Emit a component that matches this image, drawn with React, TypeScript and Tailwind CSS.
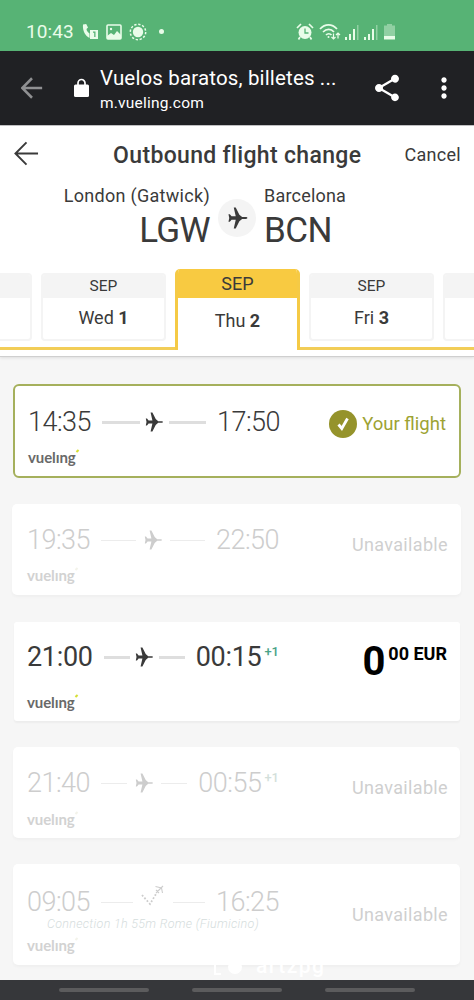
import React from 'react';
import { MdShare, MdMoreVert } from 'react-icons/md';
import clsx from 'clsx';

interface Flight {
  departure: string;
  arrival: string;
  nextDay?: boolean;
  connection?: string;
  status: 'current' | 'unavailable' | 'available';
  card: string;
  times: string;
  right: string;
  logo: string;
}

const flights: Flight[] = [
  {
    departure: '14:35',
    arrival: '17:50',
    status: 'current',
    card: 'ml-[13px] w-[448px] h-[94px] mb-[26px] border-2 border-[#a5b05c] rounded-[6px] pl-[13px] pr-[13px]',
    times: 'mt-[20px]',
    right: 'mt-[24px]',
    logo: 'mt-[8px]',
  },
  {
    departure: '19:35',
    arrival: '22:50',
    status: 'unavailable',
    card: 'ml-[12px] w-[449px] h-[91px] mb-[27px] rounded-[5px] pl-[15px] pr-[13px] shadow-[0_2px_3px_rgba(0,0,0,0.03)]',
    times: 'mt-[20px]',
    right: 'mt-[27px]',
    logo: 'mt-[8px]',
  },
  {
    departure: '21:00',
    arrival: '00:15',
    nextDay: true,
    status: 'available',
    card: 'ml-[14px] w-[446px] h-[99px] mb-[26px] rounded-[3px] px-[13px] shadow-[0_2px_2px_rgba(0,0,0,0.04)]',
    times: 'mt-[19px]',
    right: 'mt-[17px]',
    logo: 'mt-[18px]',
  },
  {
    departure: '21:40',
    arrival: '00:55',
    nextDay: true,
    status: 'unavailable',
    card: 'ml-[13px] w-[447px] h-[91px] mb-[26px] rounded-[5px] pl-[14px] pr-[12px] shadow-[0_2px_3px_rgba(0,0,0,0.03)]',
    times: 'mt-[20px]',
    right: 'mt-[27px]',
    logo: 'mt-[9px]',
  },
  {
    departure: '09:05',
    arrival: '16:25',
    connection: 'Connection 1h 55m Rome (Fiumicino)',
    status: 'unavailable',
    card: 'ml-[13px] w-[447px] h-[101px] rounded-[5px] pl-[14px] pr-[12px] shadow-[0_2px_3px_rgba(0,0,0,0.03)]',
    times: 'mt-[22px]',
    right: 'mt-[37px]',
    logo: 'mt-[4px]',
  },
];

const Plane: React.FC<{ className?: string }> = ({ className }) => (
  <svg viewBox="0 0 18 20" className={className} fill="currentColor">
    <path d="M18 10c0 .5-.6.800-1.600.800h-3.200L10.700 13 7.400 19.500H5.600L7.400 11.500H3.600L2 13.500H.8L1.500 10 .8 6.500H2l1.600 2h3.800L5.600.5h1.800L10.700 7l2.500 2.200h3.200c1 0 1.600.300 1.600.800z" />
  </svg>
);

const ConnectionPlane: React.FC = () => (
  <svg viewBox="0 0 24 24" className="w-6 h-6 -mt-[14px] shrink-0" fill="none" stroke="currentColor">
    <path d="M1 12l8 9 6-10" strokeWidth="1.800" strokeDasharray="1.800 1.800" />
    <path d="M15 10l7-7M14.500 3.500l6 1.500 1 5M15 7l3 3" strokeWidth="1.100" />
  </svg>
);

const BackArrow: React.FC<{ className?: string }> = ({ className }) => (
  <svg viewBox="0 0 26 26" className={className} fill="none" stroke="currentColor">
    <path d="M13 1.500L1.500 13 13 24.500M1.500 13H25" />
  </svg>
);

const Logo: React.FC<{ faded: boolean; className: string }> = ({ faded, className }) => (
  <div className={clsx('flex h-[22px]', className, faded ? 'text-[#d2d2d2]' : 'text-[#696969]')}>
    <span className="font-[Lato] text-[15px] leading-[22px] font-bold tracking-[-0.1px]">vuelıng</span>
    <span className={clsx('w-[3px] h-[2px] mt-[4px] -rotate-45', faded ? 'bg-[#f3f3ea]' : 'bg-[#d6df35]')}></span>
  </div>
);

const StatusBar: React.FC = () => (
  <div className="h-[51px] bg-[#57b375] text-[#e9fce9] flex items-center pt-[12px] pl-[26px]">
    <span className="w-[56px] text-[19px] leading-[24px] tracking-[0.1px]">10:43</span>
    <svg viewBox="0 0 16 17" className="w-4 h-[17px]" fill="currentColor">
      <path d="M1 1.500L4.200 1 6 4.500 4.500 6c.3 2 1.300 3.300 3 4.500V15C3.500 13 .3 8 1 1.500z" />
      <path fillRule="evenodd" d="M8 7h8v9H8zM11 8.500v1.200h1.200V14h1.300V8.500z" />
    </svg>
    <svg viewBox="0 0 16 16" className="w-4 h-4 ml-[8px]" fill="none" stroke="currentColor">
      <rect x="1" y="1" width="14" height="14" rx="1" strokeWidth="1.600" />
      <path d="M1 12l4-3 3 2 3-4 4 4v4H1z" fill="currentColor" stroke="none" />
      <circle cx="5" cy="5" r="1.200" fill="currentColor" stroke="none" />
    </svg>
    <svg viewBox="0 0 18 18" className="w-[18px] h-[18px] ml-[7px]">
      <circle cx="9" cy="9" r="5.200" fill="currentColor" />
      <circle cx="9" cy="9" r="7.700" fill="none" stroke="currentColor" strokeWidth="1.500" strokeDasharray="2.300 1.730" />
    </svg>
    <span className="w-[5px] h-[5px] rounded-full bg-[#e9fce9] ml-[12px]"></span>
    <svg viewBox="0 0 18 18" className="w-[18px] h-[18px] ml-[132px]">
      <circle cx="9" cy="9.500" r="6.500" fill="currentColor" />
      <path d="M1 5l4-4M13 1l4 4M4 14l-1.500 2.500M14 14l1.500 2.500" stroke="currentColor" strokeWidth="1.700" />
      <path d="M9 5.500V10h3.500" fill="none" stroke="#57b375" strokeWidth="1.300" />
    </svg>
    <svg viewBox="0 0 22 18" className="w-[22px] h-[18px] ml-[5px] mr-[4px]" fill="none" stroke="currentColor" strokeWidth="1.700">
      <path d="M1 6c5-5.500 12-5.500 17 0M4 9c3.500-3.500 8-3.500 11 0M7 12c1.500-1.700 4-1.700 5.500 0" />
      <circle cx="9.500" cy="14" r="1" fill="currentColor" stroke="none" />
      <path d="M14.500 10.500V16m-2-2l2 2 2-2M19 15.500V10m-2 2l2-2 2 2" strokeWidth="1.200" />
    </svg>
    {[0, 1].map((sim) => (
      <svg key={sim} viewBox="0 0 14 16" className="w-[14px] h-4 mr-[5px]" fill="currentColor">
        <path d="M0 13h2v3H0zM4 10h2v6H4zM8 5h2v11H8z" />
        <path d="M12 1h1.500v15H12z" opacity=".4" />
      </svg>
    ))}
    <svg viewBox="0 0 11 17" className="w-[11px] h-[17px] ml-px" fill="currentColor">
      <path d="M3 1h5v1.500h3V13H0V2.500h3z" opacity=".4" />
      <path d="M0 13h11v3.500H0z" />
    </svg>
  </div>
);

const BrowserBar: React.FC = () => (
  <div className="h-[75px] bg-[#202124] text-white flex border-b border-[#c4c4c6]">
    <BackArrow className="w-[22px] h-[22px] ml-[21px] mt-[26px] text-[#8f9092] stroke-[3]" />
    <svg viewBox="0 0 15 19" className="w-[15px] h-[19px] ml-[31px] mt-[27px]">
      <rect x="0" y="6.500" width="15" height="12.500" rx="1.500" fill="currentColor" />
      <path d="M4 7.500V5a3.500 3.500 0 0 1 7 0v2.500" fill="none" stroke="currentColor" strokeWidth="1.700" />
    </svg>
    <div className="ml-[11px] w-[262px] pt-[14px]">
      <div className="text-[20.5px] leading-[26px] tracking-[0.15px] whitespace-nowrap">Vuelos baratos, billetes ...</div>
      <div className="text-[15.5px] leading-[20px] tracking-[0.2px] mt-[2px]">m.vueling.com</div>
    </div>
    <MdShare className="w-[32px] h-[32px] ml-[9px] mt-[21px]" />
    <MdMoreVert className="w-[32px] h-[32px] ml-[25px] mt-[21px]" />
  </div>
);

const DayTab: React.FC<{ day: string; date: string }> = ({ day, date }) => (
  <div className="w-[125px] h-[68px] shrink-0 border-2 border-[#f4f4f4] rounded-[4px] text-center bg-white overflow-hidden">
    <div className="bg-[#f4f4f4] h-[23px] text-[15.5px] leading-[22px]">{day && 'SEP'}</div>
    <div className="text-[18px] leading-[40px]">
      {day} <b className="font-bold">{date}</b>
    </div>
  </div>
);

const DayPicker: React.FC = () => (
  <div className="flex h-[81px] mt-[19px] overflow-hidden">
    <div className="w-[175px] shrink-0 flex justify-end gap-[9px] pr-[9px] pt-[4px] border-b-[3px] border-[#f2cd57] overflow-hidden">
      <DayTab day="" date="" />
      <DayTab day="Wed" date="1" />
    </div>
    <div className="w-[125px] shrink-0 border-x-[3px] border-[#f5ca45] rounded-t-[5px] text-center overflow-hidden">
      <div className="bg-[#f8ca41] h-[29px] text-[18px] leading-[29px]">SEP</div>
      <div className="text-[18px] leading-[45px]">
        Thu <b className="font-bold">2</b>
      </div>
    </div>
    <div className="flex-1 flex gap-[9px] pl-[9px] pt-[4px] border-b-[3px] border-[#f2cd57] overflow-hidden">
      <DayTab day="Fri" date="3" />
      <DayTab day="" date="" />
    </div>
  </div>
);

const FlightCard: React.FC<{ flight: Flight }> = ({ flight }) => {
  const off = flight.status === 'unavailable';
  const bookable = flight.status === 'available';
  const line = clsx('flex-1', off ? 'h-px bg-[#ececec]' : 'h-[3px] bg-[#dedede]');
  const time = clsx('text-[27px]', bookable ? 'font-normal tracking-[-0.3px]' : 'font-light tracking-[-0.5px]');

  return (
    <div className={clsx('bg-white flex justify-between', flight.card)}>
      <div className="w-[252px]">
        <div className={clsx('flex items-center h-[32px]', flight.times, off ? 'text-[#cdcdcd]' : 'text-[#3a3a3a]')}>
          <span className={time}>{flight.departure}</span>
          <span className={clsx(line, 'ml-[11px]')}></span>
          <span className={clsx('flex', off ? 'mx-[8px]' : 'ml-[5px] mr-[6px]')}>
            {flight.connection ? <ConnectionPlane /> : <Plane className="w-[18px] h-5" />}
          </span>
          <span className={clsx(line, 'mr-[11px]')}></span>
          <span className={time}>{flight.arrival}</span>
          {flight.nextDay && (
            <span className={clsx('text-[13px] leading-[14px] ml-[3px] -mt-[10px] font-medium', off ? 'text-[#d3dfdb]' : 'text-[#4aa287]')}>
              +1
            </span>
          )}
        </div>
        {flight.connection && (
          <div className="text-[12.5px] leading-[12px] tracking-[0.3px] italic font-light text-[#d5dddd] ml-[20px] whitespace-nowrap">
            {flight.connection}
          </div>
        )}
        <Logo faded={off} className={flight.logo} />
      </div>

      <div className={flight.right}>
        {flight.status === 'current' && (
          <div className="flex items-center text-[#9da333] text-[18.5px] leading-[28px]">
            <span className="w-[28px] h-[28px] rounded-full bg-[#95932b] flex items-center justify-center mr-[5px]">
              <svg viewBox="0 0 12 14" className="w-3 h-[14px]" fill="none" stroke="#fff" strokeWidth="2.800">
                <path d="M1.500 7.500L4.800 11.500 10.500 1.500" />
              </svg>
            </span>
            Your flight
          </div>
        )}
        {off && <div className="text-[18px] leading-[28px] tracking-[0.35px] text-[#cfcfcf]">Unavailable</div>}
        {bookable && (
          <div className="flex text-black font-bold">
            <span className="text-[40px] leading-[45px]">0</span>
            <span className="text-[18px] leading-[22px] mt-[4px] ml-[3px]">00 EUR</span>
          </div>
        )}
      </div>
    </div>
  );
};

const App: React.FC = () => {
  return (
    <div className="w-[474px] h-[1000px] bg-[#f6f6f6] font-[Roboto,sans-serif] text-[#3a3a3a] flex flex-col overflow-hidden">
      <StatusBar />
      <BrowserBar />

      <header className="h-[231px] shrink-0 bg-white border-b border-[#cfcfcf] shadow-[0_1px_3px_rgba(0,0,0,0.1)]">
        <div className="flex items-center pt-[14px] pl-[14px] pr-[13px] h-[43px]">
          <BackArrow className="w-[25px] h-[25px] stroke-[2] -mt-[3px]" />
          <h1 className="flex-1 text-center text-[23px] leading-[28px] font-medium tracking-[0.33px] pl-[31px] pt-[2px]">Outbound flight change</h1>
          <span className="text-[18px] tracking-[0.3px]">Cancel</span>
        </div>
        <div className="flex mt-[15px] h-[66px]">
          <div className="w-[210px] text-right">
            <div className="text-[18px] leading-[24px] tracking-[0.3px]">London (Gatwick)</div>
            <div className="text-[35px] leading-[46px] tracking-[-0.6px]">LGW</div>
          </div>
          <div className="w-[38px] h-[38px] mt-[15px] ml-[8px] mr-[8px] rounded-full bg-[#f4f4f4] flex items-center justify-center">
            <Plane className="w-[21px] h-[22px]" />
          </div>
          <div>
            <div className="text-[18px] leading-[24px] tracking-[0.2px]">Barcelona</div>
            <div className="text-[35px] leading-[46px] tracking-[-0.6px]">BCN</div>
          </div>
        </div>
        <DayPicker />
      </header>

      <main className="h-[623px] shrink-0 pt-[27px] relative overflow-hidden">
        {flights.map((flight) => (
          <FlightCard key={flight.departure} flight={flight} />
        ))}
        <div className="absolute left-[213px] bottom-[3px] flex items-center gap-[9px] text-white text-[21px] leading-[22px] font-medium tracking-[1.5px]">
          <svg viewBox="0 0 34 20" className="w-[34px] h-5" fill="none" stroke="currentColor" strokeWidth="2">
            <path d="M8 4H2v14h6" />
            <circle cx="22" cy="11" r="6" fill="currentColor" />
          </svg>
          artzpg
        </div>
      </main>

      <nav className="h-[20px] shrink-0 bg-[#36373a] flex items-center justify-center gap-[43px]">
        <span className="w-[90px] h-[4px] rounded-full bg-[#5c5c5d]"></span>
        <span className="w-[90px] h-[4px] rounded-full bg-[#5c5c5d]"></span>
        <span className="w-[90px] h-[4px] rounded-full bg-[#5c5c5d]"></span>
      </nav>
    </div>
  );
};

export default App;
